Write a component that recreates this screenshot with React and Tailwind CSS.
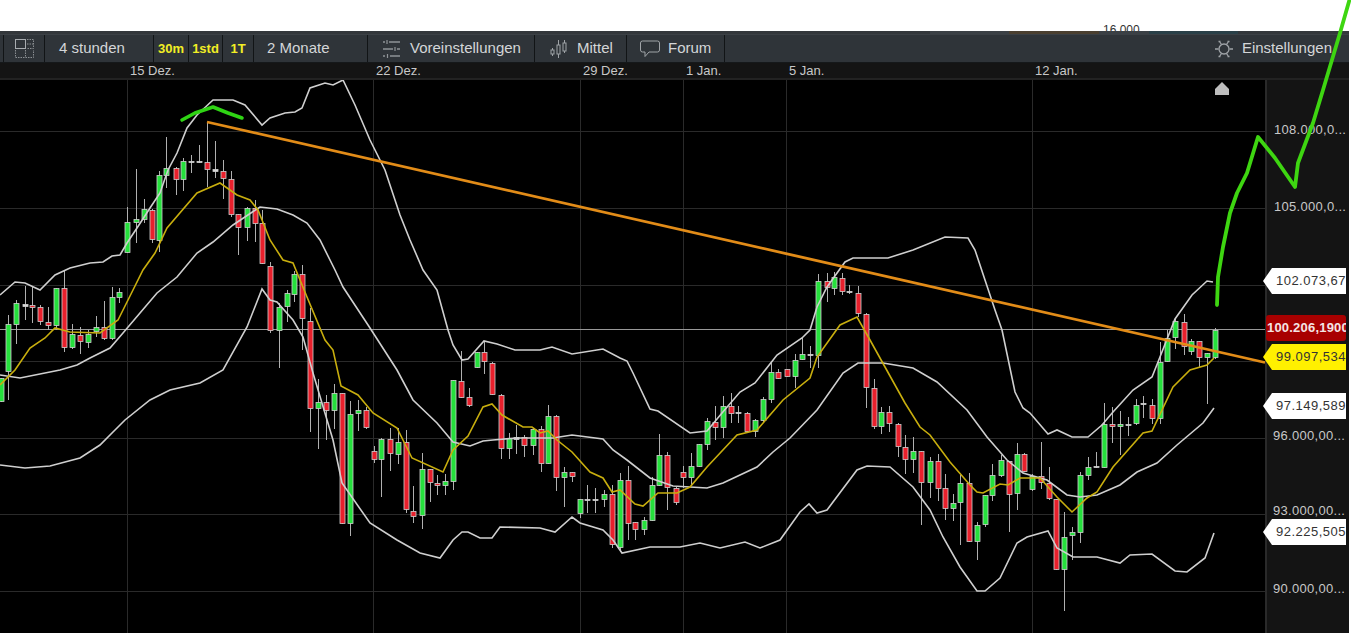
const UP = [[0,295],[15,282],[25,283],[40,290],[55,275],[70,268],[90,263],[103,262],[112,256],[120,255],[127,243],[137,228],[150,208],[160,193],[168,170],[177,153],[187,128],[197,115],[213,100],[233,100],[245,105],[262,125],[270,118],[285,113],[295,112],[302,108],[310,88],[325,83],[333,85],[343,80],[355,105],[370,140],[385,170],[400,215],[410,240],[423,270],[437,290],[448,330],[453,345],[462,360],[468,359],[484,341],[497,344],[515,350],[540,350],[552,347],[572,354],[603,349],[620,358],[627,361],[633,373],[650,409],[658,411],[690,433],[707,431],[722,413],[740,392],[755,383],[777,355],[802,338],[810,330],[817,307],[827,287],[845,262],[853,258],[888,258],[913,250],[945,237],[968,238],[975,250],[985,280],[995,310],[1002,330],[1015,392],[1023,408],[1030,413],[1048,434],[1057,430],[1072,437],[1088,437],[1102,425],[1113,412],[1133,390],[1152,377],[1158,362],[1175,319],[1192,295],[1207,281],[1213,282]]
const MID = [[0,375],[20,378],[60,370],[77,365],[90,358],[110,348],[123,333],[140,313],[157,293],[177,277],[197,253],[213,242],[233,225],[260,207],[277,209],[293,215],[307,223],[320,240],[335,270],[343,287],[370,328],[397,370],[413,400],[437,423],[453,442],[470,446],[483,441],[493,440],[517,438],[553,438],[572,435],[603,439],[613,450],[627,460],[650,478],[673,486],[707,488],[723,483],[757,467],[773,452],[790,438],[817,410],[843,373],[858,363],[883,363],[913,368],[937,382],[967,410],[987,437],[1007,460],[1023,473],[1047,480],[1067,495],[1080,497],[1097,495],[1120,485],[1137,472],[1157,463],[1177,445],[1203,423],[1214,408]]
const LOW = [[0,465],[25,468],[50,466],[80,458],[100,445],[115,430],[125,420],[150,400],[170,390],[200,383],[223,370],[247,327],[262,289],[270,300],[277,302],[293,320],[303,337],[313,373],[333,440],[342,483],[370,523],[397,540],[420,553],[440,558],[453,540],[462,532],[468,532],[480,538],[492,538],[500,527],[540,528],[555,532],[572,517],[580,523],[603,530],[613,540],[622,553],[650,547],[680,547],[700,543],[720,548],[745,542],[760,548],[780,540],[800,512],[809,504],[817,513],[827,510],[857,470],[867,466],[890,467],[913,487],[930,510],[943,537],[960,567],[977,591],[985,591],[1000,578],[1017,543],[1027,537],[1048,531],[1057,548],[1073,557],[1097,557],[1120,563],[1130,555],[1152,554],[1175,571],[1187,572],[1205,558],[1214,533]]
const MA = [[0,385],[15,370],[30,348],[45,338],[55,328],[70,332],[100,333],[118,320],[132,292],[143,270],[155,253],[167,228],[197,193],[220,183],[237,195],[250,200],[258,210],[270,240],[283,260],[293,263],[307,297],[325,340],[333,350],[341,386],[358,395],[373,413],[397,428],[412,458],[443,472],[453,450],[468,436],[483,407],[492,404],[502,415],[523,427],[532,427],[540,433],[548,431],[557,440],[572,452],[590,472],[603,478],[612,492],[620,490],[635,504],[643,506],[658,493],[677,493],[690,487],[707,467],[737,435],[757,430],[783,400],[810,378],[817,357],[840,325],[857,317],[870,340],[905,403],[920,427],[930,435],[950,462],[970,485],[977,492],[983,493],[1000,484],[1008,485],[1020,478],[1040,478],[1057,497],[1072,512],[1087,498],[1097,492],[1113,467],[1143,433],[1152,431],[1173,387],[1190,370],[1207,365],[1214,358]]
const PEN = [[1217,305],[1218,277],[1223,247],[1230,213],[1237,193],[1247,173],[1258,137],[1275,158],[1295,187],[1298,163],[1313,123],[1323,90],[1340,33],[1350,-2]]

// x, wick top, body top, body bottom, wick bottom, kind
const CANDLES = [
  [1,378,378,402,402,'g'],[8,315,324,372,400,'g'],[16,300,303,325,344,'g'],[25,286,304,307,320,'d'],[32,287,305,308,323,'r'],[40,305,307,322,325,'r'],[48,307,322,326,330,'r'],[56,288,288,326,330,'g'],[64,271,288,348,352,'r'],[72,324,334,348,349,'g'],[80,327,335,342,354,'r'],[88,330,334,343,348,'g'],[96,316,327,332,337,'g'],[104,301,327,339,340,'r'],[112,287,297,339,340,'g'],[119,288,292,298,303,'g'],
  [127,207,222,253,253,'g'],[136,169,219,223,243,'g'],[144,199,209,220,223,'g'],[152,209,210,240,243,'r'],[159,171,175,241,252,'g'],[166,137,168,176,188,'g'],[176,167,168,180,195,'r'],[183,158,161,180,191,'g'],[191,155,161,163,173,'d'],[199,145,161,163,163,'d'],[207,123,162,170,187,'r'],[215,141,169,172,178,'d'],[223,160,171,179,199,'r'],[231,171,179,215,217,'r'],[238,214,214,228,255,'r'],[247,207,208,228,241,'g'],[255,200,208,224,242,'r'],[262,210,223,264,264,'r'],[270,262,266,331,333,'r'],[279,303,307,331,368,'g'],[287,290,293,307,322,'g'],[294,271,274,295,302,'g'],[302,265,274,319,350,'r'],[310,308,321,409,432,'r'],
  [318,379,402,409,449,'g'],[326,395,402,411,440,'r'],[334,384,393,411,429,'g'],[342,393,393,524,524,'r'],[350,401,414,524,536,'g'],[358,400,410,414,431,'g'],[366,407,410,428,429,'r'],[374,446,451,460,463,'r'],[381,438,439,460,497,'g'],[390,428,439,454,471,'r'],[398,428,442,455,464,'g'],[406,430,442,510,513,'r'],[413,486,511,517,523,'r'],[422,453,469,516,529,'g'],[430,469,469,483,502,'r'],[437,475,483,486,495,'r'],[445,474,481,486,495,'g'],[453,380,380,482,490,'g'],[461,351,381,398,398,'r'],[469,388,397,406,407,'r'],[477,352,352,368,368,'g'],[484,342,352,362,374,'r'],[492,362,363,395,395,'r'],[501,394,395,449,459,'r'],[509,433,438,449,459,'g'],[516,425,437,440,454,'d'],[524,435,437,446,457,'r'],[533,428,429,446,455,'g'],[541,426,429,464,472,'r'],[548,405,416,464,464,'g'],[556,415,416,478,491,'r'],[564,467,472,478,507,'g'],[572,472,472,477,482,'r'],[580,499,499,514,518,'g'],[587,485,499,501,513,'d'],[595,488,499,501,513,'d'],[604,490,494,500,507,'g'],[612,485,494,545,548,'r'],[620,473,480,548,552,'g'],
  [628,466,480,524,540,'r'],[635,522,522,530,540,'r'],[644,517,520,530,535,'g'],[652,477,485,521,521,'g'],[659,434,455,486,486,'g'],[667,452,455,488,510,'r'],[676,487,488,503,505,'r'],[683,466,472,478,488,'r'],[691,453,466,478,485,'g'],[699,444,444,467,467,'g'],[707,418,421,445,450,'g'],[715,406,422,428,440,'r'],[723,396,406,428,438,'g'],[731,393,406,414,423,'r'],[738,406,412,414,423,'d'],[747,412,413,432,432,'r'],[755,419,420,432,437,'g'],[763,397,399,421,422,'g'],[771,363,372,400,403,'g'],[778,369,372,379,379,'r'],[787,369,369,377,377,'r'],[795,354,360,377,388,'g'],[802,338,354,360,360,'g'],[810,346,354,355,368,'d'],[818,274,281,356,368,'g'],[827,273,281,288,302,'r'],[834,272,277,289,295,'g'],[842,273,278,292,295,'r'],[849,285,291,293,294,'d'],[858,286,293,314,317,'r'],[866,313,314,388,408,'r'],[874,379,388,427,429,'r'],[881,407,412,427,434,'g'],[889,406,412,424,432,'r'],
  [898,423,424,447,457,'r'],[905,435,447,460,474,'r'],[913,437,451,460,473,'g'],[921,451,451,483,525,'r'],[930,457,461,483,498,'g'],[938,454,461,489,501,'r'],[945,474,488,509,520,'r'],[953,494,503,509,521,'g'],[960,475,483,503,545,'g'],[969,473,483,542,542,'r'],[977,522,525,542,560,'g'],[985,495,495,525,527,'g'],[992,464,475,496,501,'g'],[1001,455,460,476,477,'g'],[1009,461,461,495,532,'r'],[1017,443,454,494,510,'g'],[1024,453,454,472,472,'r'],[1032,474,476,490,491,'g'],[1041,442,476,483,489,'r'],[1049,467,483,499,500,'r'],[1056,499,499,570,570,'r'],[1064,512,537,570,611,'g'],[1072,527,532,536,560,'g'],[1080,472,475,533,543,'g'],[1088,457,467,476,480,'g'],[1096,452,466,468,468,'d'],[1104,403,424,468,468,'g'],[1112,407,424,427,443,'r'],[1120,411,424,427,455,'g'],[1128,417,424,426,436,'d'],[1136,399,405,424,425,'g'],[1143,396,403,405,418,'d'],[1152,399,405,419,424,'r'],[1160,342,362,419,424,'g'],[1167,330,338,362,362,'g'],[1175,318,321,338,349,'g'],[1184,314,322,347,355,'r'],[1191,339,341,352,355,'g'],[1199,341,341,358,368,'r'],[1207,353,353,358,404,'g'],[1215,328,330,358,359,'g'],
]

const BODY = { g: '#25e03c', r: '#e8202c', d: '#d8d8d8' }
const pts = (list) => list.map((p) => p.join(',')).join(' ')

const GRID_Y = [131, 208, 285, 361, 438, 514, 591]
const GRID_X = [127, 373, 580, 683, 786, 1032]

const DATES = [
  ['15 Dez.', 130],
  ['22 Dez.', 376],
  ['29 Dez.', 583],
  ['1 Jan.', 686],
  ['5 Jan.', 789],
  ['12 Jan.', 1035],
]

const AXIS = [
  ['108.000,0...', 42, 7],
  ['105.000,0...', 119, 7],
  ['96.000,00...', 348, 6],
  ['93.000,00...', 423, 6],
  ['90.000,00...', 501, 6],
]

function LayoutIcon() {
  return (
    <svg width="19" height="19" viewBox="0 0 19 19" fill="none" aria-hidden>
      <rect x="0.5" y="0.5" width="10" height="9" stroke="#a8acb0" />
      <path d="M12 .5h6.500v9H12M.5 11v7.500h18V11M10.500 11v7.500M12 5h6" stroke="#8a8e92" strokeDasharray="1.500 1" />
    </svg>
  )
}

function PresetIcon() {
  return (
    <svg width="17" height="18" viewBox="0 0 17 18" fill="none" stroke="#8f9397" strokeWidth="1.500" aria-hidden>
      <path d="M0 2h2M6 2h11M0 9h10M14 9h3M0 16h2M7 16h10" />
      <path d="M4 0v4M12 7v4M4.500 14v4" strokeWidth="1.200" />
    </svg>
  )
}

function CandleIcon() {
  return (
    <svg width="17" height="18" viewBox="0 0 17 18" fill="none" stroke="#a0a4a8" aria-hidden>
      <path d="M2.500 8v2M2.500 14v2M8.500 0v5M8.500 14v4M14.500 0v3M14.500 11v2" />
      <rect x="1" y="10" width="3" height="4" />
      <rect x="7" y="5" width="3" height="9" />
      <rect x="13" y="3" width="3" height="8" />
    </svg>
  )
}

function BubbleIcon() {
  return (
    <svg width="20" height="18" viewBox="0 0 20 18" fill="none" stroke="#a0a4a8" aria-hidden>
      <path d="M2.500 1h15a2 2 0 0 1 2 2v7a2 2 0 0 1-2 2H9l-4 4.500V12H2.500a2 2 0 0 1-2-2V3a2 2 0 0 1 2-2Z" />
    </svg>
  )
}

function GearIcon() {
  return (
    <svg width="18" height="18" viewBox="0 0 18 18" fill="none" stroke="#a0a4a8" strokeWidth="1.300" aria-hidden>
      <circle cx="9" cy="9" r="5" />
      <path d="M0 9h3.500M14.500 9H18M4.500 1.500l2 3M13.500 1.500l-2 3M4.500 16.500l2-3M13.500 16.500l-2-3M3.500 1.500h2M12.500 1.500h2M3.500 16.500h2M12.500 16.500h2" />
    </svg>
  )
}

function Cell({ className, children }) {
  return (
    <div className={'flex h-full shrink-0 items-center border-r border-[#111416] ' + className}>
      {children}
    </div>
  )
}

function PriceTag({ top, fill, children }) {
  return (
    <div className="absolute right-[3px] flex h-[26px] w-[83px] items-center" style={{ top }}>
      <svg width="83" height="26" viewBox="0 0 83 26" className="absolute inset-0" aria-hidden>
        <path d="M0 13 9 0h74v26H9Z" fill={fill} />
      </svg>
      <span className="relative w-full whitespace-nowrap text-right text-[13px] tracking-[0.5px] text-[#333]">
        {children}
      </span>
    </div>
  )
}

function Chart() {
  return (
    <svg width="1265" height="553" viewBox="0 80 1265 553" className="block blur-[0.35px]" aria-hidden>
      {GRID_Y.map((y) => (
        <line key={y} x1="0" x2="1265" y1={y + 0.5} y2={y + 0.5} stroke="#2a2a2a" />
      ))}
      {GRID_X.map((x) => (
        <line key={x} x1={x + 0.5} x2={x + 0.5} y1="80" y2="633" stroke="#2a2a2a" />
      ))}
      <line x1="0" x2="1265" y1="329.500" y2="329.500" stroke="#999" />
      {CANDLES.map(([x, hi, top, bot, lo, kind]) => (
        <g key={x}>
          <line x1={x + 0.5} x2={x + 0.5} y1={hi} y2={lo} stroke="#b0b0b0" />
          <rect x={x - 2} y={top + 0.5} width="5" height={Math.max(bot - top - 1, 1)} fill={BODY[kind]} stroke="#d0d0d0" strokeWidth="0.800" />
        </g>
      ))}
      <polyline points={pts(UP)} fill="none" stroke="#cfcfcf" strokeWidth="1.600" />
      <polyline points={pts(MID)} fill="none" stroke="#cfcfcf" strokeWidth="1.600" />
      <polyline points={pts(LOW)} fill="none" stroke="#cfcfcf" strokeWidth="1.600" />
      <polyline points={pts(MA)} fill="none" stroke="#c8ae0e" strokeWidth="1.600" />
      <path d="M1215 95v-6l7-7 7 7v6Z" fill="#bdbdbd" />
    </svg>
  )
}

// hand-drawn markup sits on top of chart and axis
function Markup() {
  return (
    <svg width="1351" height="633" viewBox="0 0 1351 633" className="pointer-events-none absolute left-0 top-0" aria-hidden>
      <line x1="207" y1="122" x2="1265" y2="362.500" stroke="#e28c18" strokeWidth="2.800" />
      <polyline points="182,120 195,113 213,107 228,113 242,118" fill="none" stroke="#2fd414" strokeWidth="3.600" strokeLinecap="round" strokeLinejoin="round" />
      <polyline points={pts(PEN)} fill="none" stroke="#3ed611" strokeWidth="3.800" strokeLinecap="round" strokeLinejoin="round" />
    </svg>
  )
}

export default function App() {
  return (
    <div className="relative h-[633px] w-[1351px] overflow-hidden bg-white font-['Liberation_Sans',Arial,sans-serif]">
      {/* clipped edge of the window above */}
      <div className="relative h-[31px] overflow-hidden bg-white">
        <span className="absolute left-[1103px] top-[24px] text-[12px] leading-[12px] text-[#333]">16,000</span>
      </div>

      <div className="mr-[2px] flex h-[602px] flex-col bg-black">
        <div className="flex h-[4px] shrink-0 bg-[#3b4045]">
          <div className="h-[3px] w-[930px] bg-[#33373b]" />
          <div className="h-[3px] w-[79px] bg-[#3b4045]" />
          <div className="h-[3px] w-[90px] bg-[#4a3f30]" />
          <div className="h-[3px] w-[50px] bg-[#3b4045]" />
          <div className="h-[3px] w-[89px] bg-[#2a4048]" />
          <div className="h-[3px] flex-1 bg-[#33373b]" />
        </div>

        {/* toolbar */}
        <div className="flex h-[28px] shrink-0 items-center border-b border-[#15181a] bg-[#2f3439] text-[15px] text-[#d4d6d8]">
          <Cell className="w-[4px]" />
          <Cell className="w-[41px] pl-[11px]"><LayoutIcon /></Cell>
          <Cell className="w-[109px] pl-[14px]">4 stunden</Cell>
          <Cell className="w-[35px] justify-center text-[13px] font-bold text-[#f2ee25]">30m</Cell>
          <Cell className="w-[34px] justify-center text-[13px] font-bold text-[#f2ee25]">1std</Cell>
          <Cell className="w-[31px] justify-center text-[13px] font-bold text-[#f2ee25]">1T</Cell>
          <Cell className="w-[114px] pl-[13px]">2 Monate</Cell>
          <Cell className="w-[167px] gap-[10px] pl-[15px]"><PresetIcon />Voreinstellungen</Cell>
          <Cell className="w-[92px] gap-[10px] pl-[15px]"><CandleIcon />Mittel</Cell>
          <Cell className="w-[98px] gap-[8px] pl-[13px]"><BubbleIcon />Forum</Cell>
          <div className="ml-auto flex h-full items-center gap-[9px] pr-[17px]"><GearIcon />Einstellungen</div>
        </div>

        {/* date axis */}
        <div className="relative h-[17px] shrink-0 border-b-[2px] border-[#222] bg-[#141414] text-[13px] leading-[16px] text-[#c8c8c8]">
          {DATES.map(([label, x]) => (
            <span key={label} className="absolute top-0" style={{ left: x }}>{label}</span>
          ))}
        </div>

        {/* chart + price axis */}
        <div className="flex flex-1">
          <div className="w-[1265px] shrink-0 overflow-hidden">
            <Chart />
          </div>
          <div className="relative flex-1 border-l-[2px] border-[#2a2a2a] bg-[#141414]">
            {AXIS.map(([label, top, left]) => (
              <span key={label} className="absolute whitespace-nowrap text-[13px] leading-[16px] tracking-[0.3px] text-[#c8c8c8]" style={{ top, left }}>
                {label}
              </span>
            ))}
            <PriceTag top={188} fill="#ffffff">102.073,67</PriceTag>
            <div className="absolute left-[-1px] top-[235px] flex h-[26px] w-[80px] items-center overflow-hidden whitespace-nowrap rounded-[3px] bg-[#a80000] pl-[1px] text-[13px] font-bold tracking-[0.2px] text-[#f4e4e4]">
              100.206,1900
            </div>
            <PriceTag top={264} fill="#fff000">99.097,534</PriceTag>
            <PriceTag top={313} fill="#ffffff">97.149,589</PriceTag>
            <PriceTag top={439} fill="#ffffff">92.225,505</PriceTag>
          </div>
        </div>
      </div>

      <Markup />
    </div>
  )
}
